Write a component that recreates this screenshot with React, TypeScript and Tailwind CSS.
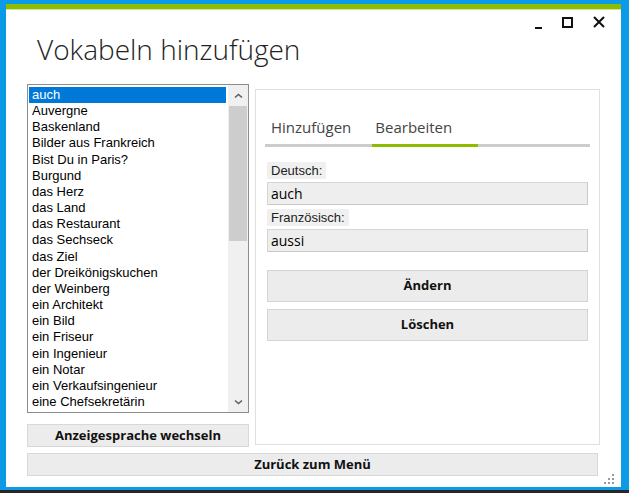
import { useState } from 'react';

const words = [
  'auch',
  'Auvergne',
  'Baskenland',
  'Bilder aus Frankreich',
  'Bist Du in Paris?',
  'Burgund',
  'das Herz',
  'das Land',
  'das Restaurant',
  'das Sechseck',
  'das Ziel',
  'der Dreikönigskuchen',
  'der Weinberg',
  'ein Architekt',
  'ein Bild',
  'ein Friseur',
  'ein Ingenieur',
  'ein Notar',
  'ein Verkaufsingenieur',
  'eine Chefsekretärin',
];

const ui = "font-['Open_Sans',sans-serif]";
const classic = "font-['Liberation_Sans',Arial,sans-serif]";

function Chevron({ down }: { down?: boolean }) {
  return (
    <svg width="9" height="6" viewBox="0 0 9 6">
      <path
        d={down ? 'M1 1.5 L4.5 4.5 L8 1.5' : 'M1 4.5 L4.5 1.5 L8 4.5'}
        fill="none"
        stroke="#606060"
        strokeWidth="1.6"
      />
    </svg>
  );
}

export default function App() {
  const [selected, setSelected] = useState(0);
  const [tab, setTab] = useState<'add' | 'edit'>('edit');

  return (
    <div className="w-[629px] h-[493px] flex flex-col bg-[#0a9ae6] overflow-hidden">
      <div className="flex-1 pl-[6px] pr-[8px] pt-[4px] pb-[3px] flex">
        <div className="flex-1 flex flex-col bg-white">
          <div className="h-[5px] bg-[#8cbd00]" />
          <div className="h-[1px] bg-[#cfe49a]" />

          {/* title bar */}
          <div className="flex justify-end items-start gap-[20px] pr-[16px] pt-[6px] h-[20px]">
            <div className="w-[7px] h-[2px] bg-[#111] mt-[11px]" />
            <div className="w-[11px] h-[11px] border-2 border-[#111] mt-[1px]" />
            <svg width="12" height="12" viewBox="0 0 12 12">
              <path d="M1 1 L11 11 M11 1 L1 11" stroke="#111" strokeWidth="2" />
            </svg>
          </div>
          <h1 className={`${ui} font-light text-[28px] leading-[38px] text-[#222] ml-[31px] mt-0`}>
            Vokabeln hinzufügen
          </h1>

          <div className="flex gap-[6px] ml-[21px] mt-[16px]">
            {/* left column */}
            <div className="w-[222px] flex flex-col gap-[11px]">
              <div className="h-[329px] border border-[#8c8c8c] flex">
                <div className="flex-1 p-[2px] pl-[1px] flex flex-col">
                  {words.map((w, i) => (
                    <div
                      key={w}
                      onClick={() => setSelected(i)}
                      className={`${classic} text-[13px] h-[16.3px] leading-[16px] pl-[3px] whitespace-nowrap ${
                        i === selected ? 'bg-[#0078d7] text-white' : 'text-black'
                      }`}
                    >
                      {w}
                    </div>
                  ))}
                </div>
                <div className="w-[20px] bg-[#f0f0f0] flex flex-col">
                  <div className="h-[21px] flex items-center justify-center">
                    <Chevron />
                  </div>
                  <div className="h-[135px] mx-[1px] bg-[#cdcdcd]" />
                  <div className="flex-1" />
                  <div className="h-[20px] flex items-center justify-center">
                    <Chevron down />
                  </div>
                </div>
              </div>
              <button className={`${ui} h-[23px] bg-[#ececec] border border-[#d8d8d8] text-[13px] font-bold text-[#111]`}>
                Anzeigesprache wechseln
              </button>
            </div>

            {/* right panel */}
            <div className="w-[345px] h-[356px] mt-[5px] border border-[#e0e0e0] px-[11px] flex flex-col">
              <div className={`${ui} flex text-[15px] text-[#444] mt-[26px] ml-[4px] gap-[24px]`}>
                <button onClick={() => setTab('add')}>Hinzufügen</button>
                <button onClick={() => setTab('edit')}>Bearbeiten</button>
              </div>
              <div className="relative h-[3px] bg-[#cccccc] mt-[5px] mx-[-2px]">
                <div
                  className={`absolute top-0 h-[3px] w-[106px] bg-[#8cbd00] ${
                    tab === 'edit' ? 'left-[107px]' : 'left-0'
                  }`}
                />
              </div>

              <div className={`${classic} text-[13px] text-[#222] flex flex-col mt-[15px]`}>
                <div className="self-start bg-[#f0f0f0] h-[17px] leading-[17px] px-[4px]">Deutsch:</div>
                <div className={`${ui} mt-[3px] h-[23px] bg-[#eeeeee] border border-[#d6d6d6] border-r-[#c8c8c8] border-b-[#c8c8c8] pl-[3px] text-[14px] leading-[21px] text-black`}>
                  {words[selected]}
                </div>
                <div className="self-start bg-[#f0f0f0] h-[17px] leading-[17px] px-[4px] mt-[4px]">Französisch:</div>
                <div className={`${ui} mt-[3px] h-[23px] bg-[#eeeeee] border border-[#d6d6d6] border-r-[#c8c8c8] border-b-[#c8c8c8] pl-[3px] text-[14px] leading-[21px] text-black`}>
                  aussi
                </div>
              </div>

              <button className={`${ui} mt-[18px] h-[32px] bg-[#ececec] border border-[#d4d4d4] text-[13px] font-bold text-[#111]`}>
                Ändern
              </button>
              <button className={`${ui} mt-[7px] h-[32px] bg-[#ececec] border border-[#d4d4d4] text-[13px] font-bold text-[#111]`}>
                Löschen
              </button>
            </div>
          </div>

          <div className="flex items-end">
            <button className={`${ui} ml-[21px] mt-[6px] w-[571px] h-[23px] bg-[#ececec] border border-[#d8d8d8] text-[13px] font-bold text-[#111]`}>
              Zurück zum Menü
            </button>
            <svg width="12" height="12" viewBox="0 0 12 12" className="ml-[5px] mb-[-9px]">
              <g fill="#9a9a9a">
                <rect x="9" y="1" width="2" height="2" />
                <rect x="5" y="5" width="2" height="2" />
                <rect x="9" y="5" width="2" height="2" />
                <rect x="1" y="9" width="2" height="2" />
                <rect x="5" y="9" width="2" height="2" />
                <rect x="9" y="9" width="2" height="2" />
              </g>
            </svg>
          </div>
        </div>
      </div>
      <div className="h-[3px] bg-[#262626]" />
    </div>
  );
}
